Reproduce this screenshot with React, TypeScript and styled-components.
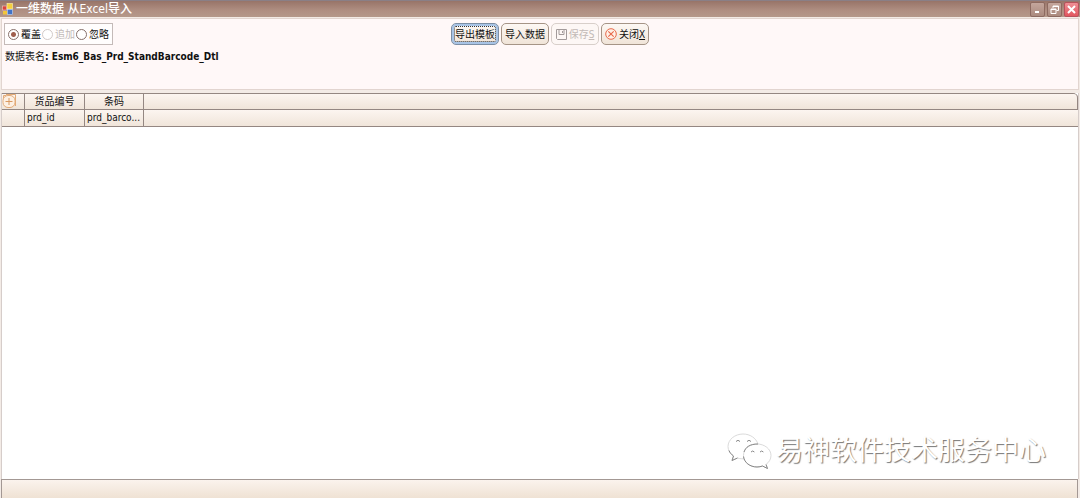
import React from "react";
import styled, { createGlobalStyle, css } from "styled-components";

const GlobalStyle = createGlobalStyle`
  * { box-sizing: border-box; }
  body {
    margin: 0;
    background: #f3ebe6;
    color: #111;
    font: 10px/12px "DejaVu Sans Condensed", "Noto Sans CJK SC", sans-serif;
  }
`;

const Window = styled.div`
  display: flex;
  flex-direction: column;
  min-height: 100vh;
`;

const TitleBar = styled.header`
  display: flex;
  align-items: center;
  gap: 3px;
  height: 17px;
  padding: 0 1px 0 2px;
  border-top: 1px solid #8a7f86;
  background: linear-gradient(#987468, #b08f82 60%, #b5988a);
`;

const Title = styled.h1`
  flex: 1;
  margin: 0;
  color: #fff;
  font-size: 12px;
  line-height: 14px;
  font-weight: 500;
`;

const WindowButtons = styled.div`
  display: flex;
  gap: 2px;
`;

const WindowButton = styled.button<{ $danger?: boolean }>`
  display: flex;
  align-items: center;
  justify-content: center;
  width: 15px;
  height: 15px;
  padding: 0;
  border: 1px solid ${(p) => (p.$danger ? "#b8525c" : "#8d6a60")};
  border-radius: 2px;
  background: ${(p) =>
    p.$danger ? "linear-gradient(#ee8f94, #e2565f)" : "linear-gradient(#c4a69c, #ab8a7e)"};
`;

const Panel = styled.section`
  display: grid;
  grid-template-columns: 1fr auto 1fr;
  align-content: start;
  row-gap: 6px;
  height: 72px;
  margin: 1px 1px 3px;
  padding: 4px 2px;
  border: 1px solid #e2d5d0;
  background: #fff8f8;
`;

const ModeGroup = styled.fieldset`
  display: flex;
  justify-self: start;
  align-items: center;
  gap: 1px;
  height: 22px;
  margin: 0;
  padding: 0 3px;
  border: 1px solid #c4bab8;
  background: #fffdfd;
`;

const ModeLabel = styled.label<{ $muted?: boolean }>`
  display: flex;
  align-items: center;
  gap: 2px;
  color: ${(p) => (p.$muted ? "#c0b9b7" : "#111")};
`;

const Caption = styled.span`
  padding-top: 2px;
  line-height: 12px;
`;

const Radio = styled.input`
  appearance: none;
  width: 11px;
  height: 11px;
  margin: 0;
  border: 1px solid #86706b;
  border-radius: 50%;
  background: #fff;
  &:checked {
    background: radial-gradient(circle, #a0604f 2px, #fff 3px);
  }
  &:disabled {
    border-color: #d2cac8;
  }
`;

const Actions = styled.div`
  display: flex;
  gap: 2px;
  margin-left: 20px;
`;

const ActionButton = styled.button<{ $focused?: boolean }>`
  display: flex;
  align-items: center;
  justify-content: center;
  gap: 2px;
  width: 48px;
  height: 22px;
  padding: 0;
  border: 1px solid #a59486;
  border-radius: 5px;
  background: linear-gradient(#fdf8f4, #f0e4d8);
  color: #111;
  font: inherit;
  white-space: nowrap;
  ${(p) =>
    p.$focused &&
    css`
      border-color: #7d8fa5;
      box-shadow: inset 0 0 0 2px #a8c4e6;
      outline: 1px dotted #333;
      outline-offset: -4px;
    `}
  &:disabled {
    border-color: #d8cfca;
    background: #fdf7f5;
    color: #c3bab7;
  }
`;

const TableName = styled.p`
  grid-column: 1 / -1;
  margin: 0 1px;
`;

const Grid = styled.main`
  position: relative;
  display: flex;
  flex: 1;
  flex-direction: column;
  margin: 0 1px;
  border: 1px solid #d6cdca;
  border-width: 0 1px;
  background: #fff;
`;

const Table = styled.table`
  width: 100%;
  border: 1px solid #948782;
  border-width: 1px 0;
  border-radius: 0 5px 0 0;
  border-spacing: 0;
  table-layout: fixed;
  background: #f3ebe6;
`;

const Cell = styled.td`
  height: 16px;
  padding: 0 2px;
  overflow: hidden;
  border-right: 1px solid #948782;
  background: linear-gradient(#fcf5f0, #f0e5da);
  font-weight: 400;
  text-align: left;
  text-overflow: ellipsis;
  white-space: nowrap;
  &:last-child { border-right: 0; }
`;

const HeadCell = styled(Cell)`
  border-bottom: 1px solid #948782;
  text-align: center;
  &:last-child {
    border-right: 1px solid #948782;
    border-radius: 0 4px 0 0;
  }
`;

const MarkerCell = styled(HeadCell)`
  padding: 0;
  text-align: left;
  svg { display: block; }
`;

const Col = styled.col<{ $width?: number }>`
  width: ${(p) => (p.$width ? `${p.$width}px` : "auto")};
`;

const Footer = styled.footer`
  height: 19px;
  margin: 0 2px 0 1px;
  border: 1px solid #a39894;
  border-bottom: 0;
  background: linear-gradient(#fbf3ed, #efe2d4);
`;

const Watermark = styled.div`
  position: absolute;
  right: 32px;
  bottom: 9px;
  display: flex;
  align-items: center;
  gap: 4px;
  color: #fff;
  font-size: 27px;
  line-height: 38px;
  text-shadow: 1px 1px 1px #777;
`;

const AppIcon = () => (
  <svg width="11" height="12" viewBox="0 0 11 12" aria-hidden="true">
    <rect x="5" y="0.5" width="5.5" height="5.5" fill="#f5cf3c" stroke="#fff3b0" strokeWidth=".6" />
    <rect x="0.5" y="3" width="4" height="4" fill="#d8433c" stroke="#f6c6bf" strokeWidth=".6" />
    <rect x="1" y="8" width="4" height="3.5" fill="#f2c63a" />
    <rect x="5.5" y="6.5" width="5" height="5" fill="#3f73c8" stroke="#c3d9f8" strokeWidth=".6" />
  </svg>
);

const MarkerIcon = () => (
  <svg width="15" height="15" viewBox="0 0 15 15" fill="none" stroke="#e3ab78" aria-hidden="true">
    <path d="M1.500 5V1.500H4M4 .5H13.500V12" />
    <rect x="1" y="1.500" width="12" height="12" rx="5" fill="#fdf0e3" />
    <path d="M3.500 7.500H10.500M7 4V11" stroke="#d99a62" />
  </svg>
);

const SaveIcon = () => (
  <svg width="11" height="11" viewBox="0 0 11 11" fill="none" stroke="#a29a9a" aria-hidden="true">
    <path d="M.5 .5H10.5V10.5H1.5L.5 9.5ZM3 .5V5.5H8V.5M6.5 2V4" />
  </svg>
);

const CloseIcon = () => (
  <svg width="12" height="12" viewBox="0 0 12 12" fill="none" stroke="#e8694a" aria-hidden="true">
    <circle cx="6" cy="6" r="5.3" fill="#fff1e8" />
    <path d="M3.300 3.300L8.700 8.700M8.700 3.300L3.300 8.700" strokeWidth="1.1" />
  </svg>
);

const ChatIcon = () => (
  <svg width="45" height="36" viewBox="0 0 45 36" aria-hidden="true">
    <g fill="#fff" stroke="#d0d0d0" strokeWidth=".8">
      <path d="M31 11C29 5 23 1 16 1C8 1 1 6.500 1 13.500C1 17.500 3 20.500 6.500 23L5 27.500L10.500 25C13 25.800 15.500 26 18 25.700" />
      <path d="M30 11C22.500 11 16.500 16 16.500 22.500C16.500 29 22.500 34 30 34C32 34 34 33.600 35.500 33L40.500 35.500L39 31.500C42 29.200 44 26.200 44 22.500C44 16 37.500 11 30 11Z" />
    </g>
    <g fill="none" stroke="#888">
      <path d="M9 8.500Q11 6 13 8.500M20 8.500Q22 6 24 8.500M24 19Q25.700 17 27.400 19M33 19Q34.700 17 36.400 19" />
      <path d="M16.500 23.500C17.200 29.500 23 34 30 34C32 34 34 33.600 35.500 33L40.500 35.500L39 31.500M2 17.500C3 20 4.500 21.500 6.500 23L5 27.500L10.500 25M17 19C18.500 14 23 11 31 11" />
    </g>
  </svg>
);

export default function App() {
  return (
    <Window>
      <GlobalStyle />
      <TitleBar>
        <AppIcon />
        <Title>一维数据 从Excel导入</Title>
        <WindowButtons>
          <WindowButton aria-label="最小化">
            <svg width="9" height="9" stroke="#fff" strokeWidth="2"><path d="M2 7H6" /></svg>
          </WindowButton>
          <WindowButton aria-label="还原">
            <svg width="9" height="9" fill="none" stroke="#fff">
              <path d="M3 3V1H8.500V5.500H6.500M3 1.500H8.500M1 4H6V8.500H1ZM1 4.500H6" />
            </svg>
          </WindowButton>
          <WindowButton $danger aria-label="关闭">
            <svg width="9" height="9" stroke="#fff" strokeWidth="2"><path d="M1 1L8 8M8 1L1 8" /></svg>
          </WindowButton>
        </WindowButtons>
      </TitleBar>
      <Panel>
        <ModeGroup aria-label="导入方式">
          <ModeLabel><Radio type="radio" name="mode" defaultChecked /><Caption>覆盖</Caption></ModeLabel>
          <ModeLabel $muted><Radio type="radio" name="mode" disabled /><Caption>追加</Caption></ModeLabel>
          <ModeLabel><Radio type="radio" name="mode" /><Caption>忽略</Caption></ModeLabel>
        </ModeGroup>
        <Actions>
          <ActionButton $focused><Caption>导出模板</Caption></ActionButton>
          <ActionButton><Caption>导入数据</Caption></ActionButton>
          <ActionButton disabled><SaveIcon /><Caption>保存<u>S</u></Caption></ActionButton>
          <ActionButton><CloseIcon /><Caption>关闭<u>X</u></Caption></ActionButton>
        </Actions>
        <TableName>数据表名<b>: Esm6_Bas_Prd_StandBarcode_Dtl</b></TableName>
      </Panel>
      <Grid>
        <Table>
          <colgroup>
            <Col $width={23} />
            <Col $width={60} />
            <Col $width={59} />
            <Col />
          </colgroup>
          <thead>
            <tr>
              <MarkerCell><MarkerIcon /></MarkerCell>
              <HeadCell as="th" scope="col">货品编号</HeadCell>
              <HeadCell as="th" scope="col">条码</HeadCell>
              <HeadCell />
            </tr>
          </thead>
          <tbody>
            <tr>
              <Cell />
              <Cell>prd_id</Cell>
              <Cell>prd_barco...</Cell>
              <Cell />
            </tr>
          </tbody>
        </Table>
        <Watermark><ChatIcon /><span>易神软件技术服务中心</span></Watermark>
      </Grid>
      <Footer />
    </Window>
  );
}
